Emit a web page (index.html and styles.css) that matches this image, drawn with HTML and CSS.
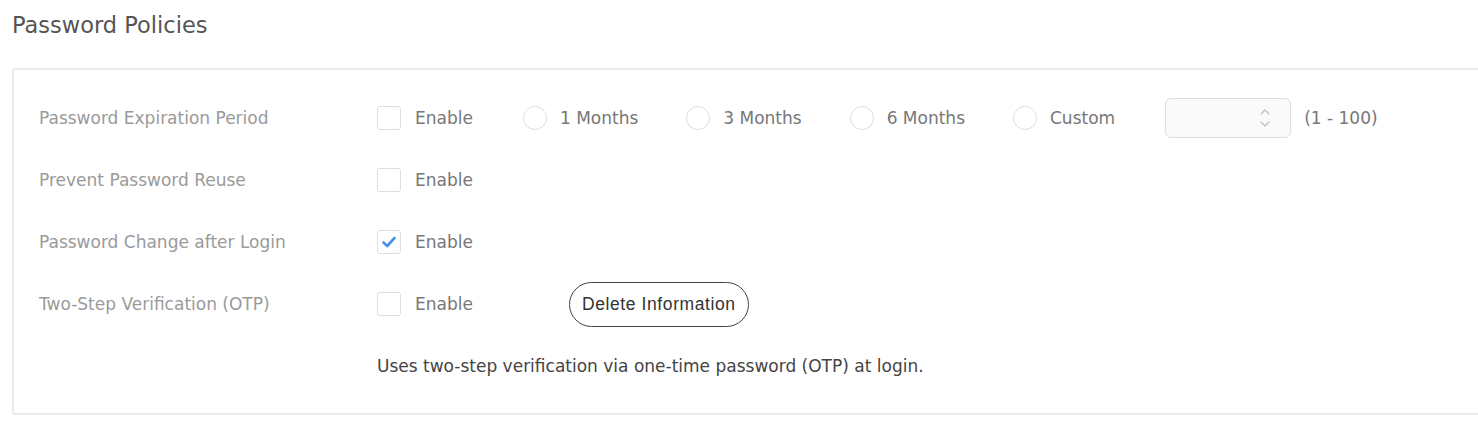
FILE: index.html
```html
<!DOCTYPE html>
<html lang="en">
<head>
    <meta charset="UTF-8">
    <title>Password Policies</title>
    <link rel="stylesheet" href="styles.css">
</head>
<body>
    <div class="page">
        <h1 class="title">Password Policies</h1>

        <div class="card">
            <div class="row">
                <div class="label">Password Expiration Period</div>
                <div class="controls">
                    <span class="option"><span class="box"></span><span class="text">Enable</span></span>
                    <span class="option"><span class="radio"></span><span class="text">1 Months</span></span>
                    <span class="option"><span class="radio"></span><span class="text">3 Months</span></span>
                    <span class="option"><span class="radio"></span><span class="text">6 Months</span></span>
                    <span class="option"><span class="radio"></span><span class="text">Custom</span></span>
                    <span class="number">
                        <svg class="spin" width="12" height="26" viewBox="0 0 12 26">
                            <path d="M2 9 L6 5 L10 9" />
                            <path d="M2 17 L6 21 L10 17" />
                        </svg>
                    </span>
                    <span class="range">(1 - 100)</span>
                </div>
            </div>

            <div class="row">
                <div class="label">Prevent Password Reuse</div>
                <div class="controls">
                    <span class="option"><span class="box"></span><span class="text">Enable</span></span>
                </div>
            </div>

            <div class="row">
                <div class="label">Password Change after Login</div>
                <div class="controls">
                    <span class="option">
                        <span class="box checked">
                            <svg width="18" height="18" viewBox="0 0 18 18">
                                <path d="M3.5 9.5 L7.2 13 L14.5 5" />
                            </svg>
                        </span>
                        <span class="text">Enable</span>
                    </span>
                </div>
            </div>

            <div class="row">
                <div class="label">Two-Step Verification (OTP)</div>
                <div class="controls">
                    <span class="option"><span class="box"></span><span class="text">Enable</span></span>
                    <button class="pill">Delete Information</button>
                </div>
            </div>

            <div class="row">
                <div class="label"></div>
                <div class="note">Uses two-step verification via one-time password (OTP) at login.</div>
            </div>
        </div>
    </div>
</body>
</html>
```

FILE: styles.css
```css
body {
    margin: 0;
    background: #fff;
    font-family: "DejaVu Sans", Verdana, sans-serif;
    font-size: 17px;
    color: #777;
}

.page {
    padding: 0 0 0 12px;
}

.title {
    margin: 0;
    height: 68px;
    padding-top: 12px;
    box-sizing: border-box;
    font-size: 22.5px;
    font-weight: normal;
    color: #555;
}

.card {
    border: 2px solid #ebebeb;
    border-right: none;
    border-radius: 3px 0 0 3px;
    padding: 17px 0 16px 25px;
}

.row {
    display: flex;
    align-items: center;
    height: 62px;
}

.label {
    width: 338px;
    flex-shrink: 0;
    color: #9a9a9a;
}

.controls {
    display: flex;
    align-items: center;
    gap: 48px;
}

.option {
    display: inline-flex;
    align-items: center;
    gap: 14px;
    color: #777;
}

.option:first-child {
    margin-right: 2px;
}

.box {
    width: 22px;
    height: 22px;
    border: 1px solid #dedede;
    border-radius: 3px;
    display: inline-flex;
    align-items: center;
    justify-content: center;
}

.box svg path {
    fill: none;
    stroke: #4a8fe7;
    stroke-width: 2.6;
    stroke-linecap: round;
    stroke-linejoin: round;
}

.radio {
    width: 22px;
    height: 22px;
    border: 1px solid #dedede;
    border-radius: 50%;
    margin-right: -1px;
}

.number {
    width: 126px;
    height: 40px;
    border: 1px solid #dedede;
    border-radius: 6px;
    background: #fafafa;
    display: inline-flex;
    align-items: center;
    justify-content: flex-end;
    padding-right: 19px;
    box-sizing: border-box;
    margin-left: 2px;
}

.spin path {
    fill: none;
    stroke: #c2c2c2;
    stroke-width: 1.4;
    stroke-linecap: round;
    stroke-linejoin: round;
}

.range {
    margin-left: -35px;
    color: #777;
}

.pill {
    font-family: "Liberation Sans", Arial, sans-serif;
    font-size: 17.5px;
    letter-spacing: 0.6px;
    color: #333;
    background: #fff;
    border: 1.5px solid #444;
    border-radius: 23px;
    height: 45px;
    padding: 0 12px;
    margin-left: 46px;
}

.note {
    color: #444;
}
```
